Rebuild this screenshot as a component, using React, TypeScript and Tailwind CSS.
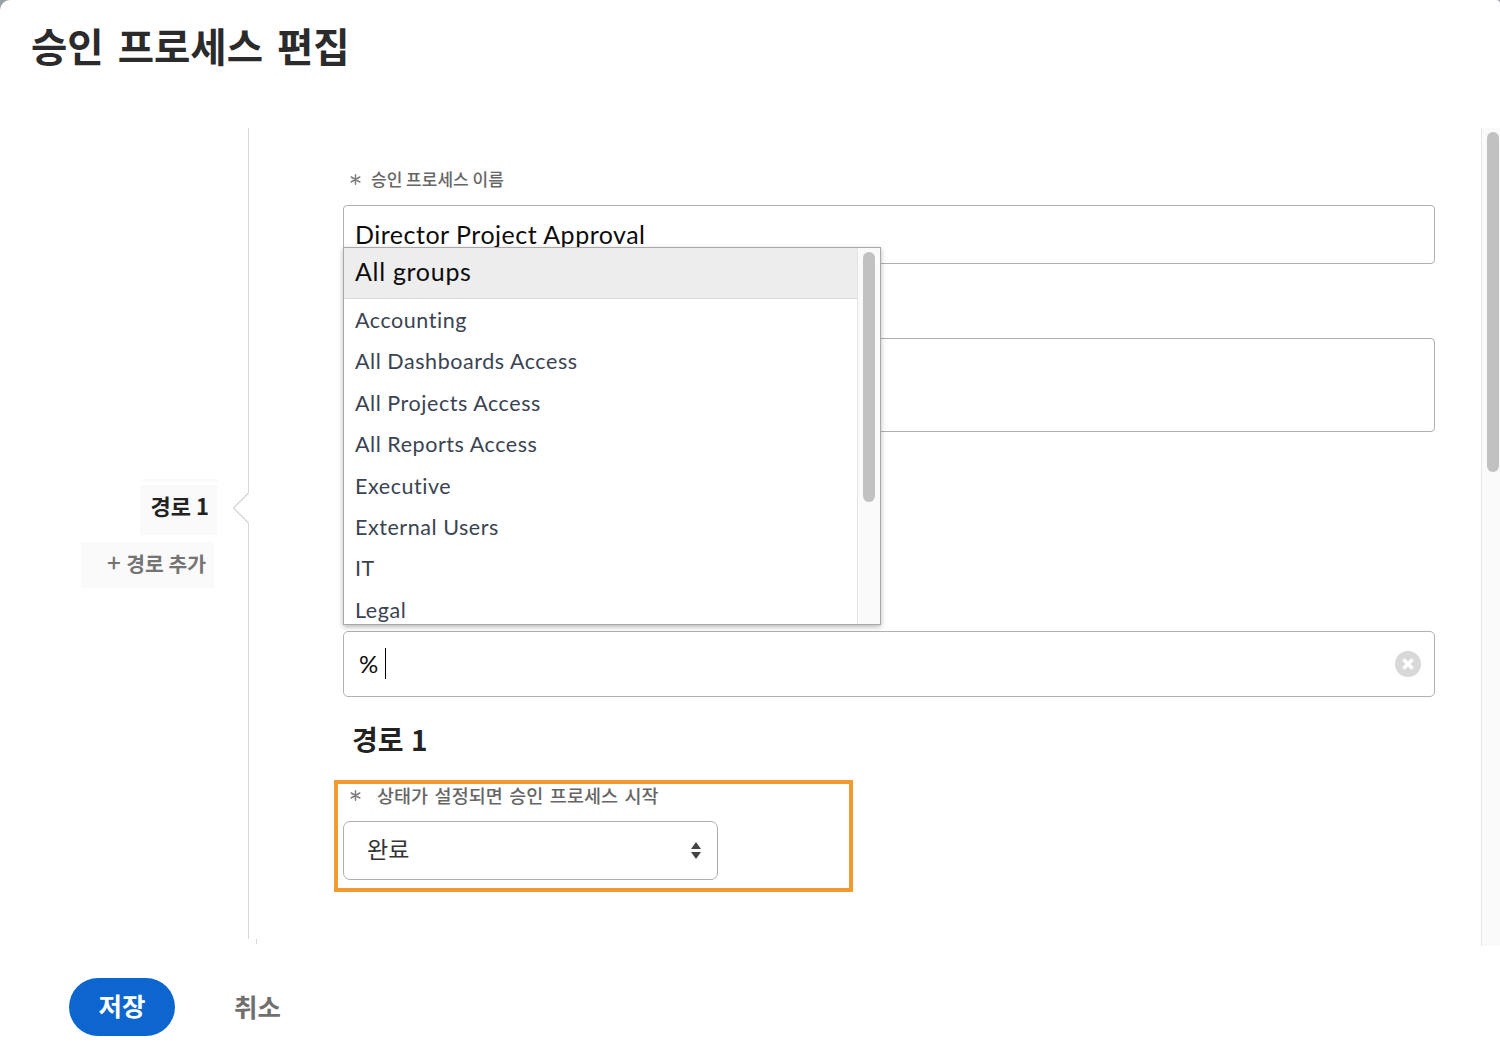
import React from "react";

const groups = [
  "Accounting",
  "All Dashboards Access",
  "All Projects Access",
  "All Reports Access",
  "Executive",
  "External Users",
  "IT",
  "Legal",
];

const kr = "font-['Noto_Sans_CJK_KR',sans-serif]";
const latin = "font-['Lato',sans-serif]";

function Asterisk() {
  return (
    <svg width="11" height="11" viewBox="0 0 11 11" fill="none" stroke="#7d7d7d" strokeWidth="1.5" strokeLinecap="round" className="shrink-0">
      <path d="M5.5 0.8v9.4M1.2 3l8.6 5M9.8 3l-8.6 5" />
    </svg>
  );
}

function Sidebar() {
  return (
    <aside className="flex w-[232px] shrink-0 flex-col items-end pt-[351px]">
      <div className="mr-[14px] h-[3px] w-[76px] bg-[#fafafa]" />
      <div className="mt-[3px] mr-[15px] flex h-[50px] w-[77px] justify-end bg-[#fafafa] pr-[8px]">
        <span className={`${kr} mt-[5px] text-[22px] leading-[30px] font-bold whitespace-nowrap text-[#222]`}>경로 1</span>
      </div>
      <div className="mt-[7px] mr-[18px] flex h-[46px] w-[133px] items-start justify-end bg-[#fafafa] pr-[8px]">
        <span className={`${kr} mt-[6px] text-[20.4px] leading-[30px] font-bold whitespace-nowrap text-[#747474]`}>
          <span className="mr-[1px] text-[24px] leading-[20px] font-medium">+</span> 경로 추가
        </span>
      </div>
    </aside>
  );
}

function Divider() {
  return (
    <div className="flex w-[26px] shrink-0 flex-col">
      <div className="ml-[16px] h-[365px] w-px bg-[#d8d8d8]" />
      <svg width="17" height="30" viewBox="0 0 17 30" fill="none" stroke="#d4d4d4" strokeWidth="1.2">
        <path d="M16.5 0L1.5 15L16.5 30" />
      </svg>
      <div className="ml-[16px] h-[416px] w-px bg-[#d8d8d8]" />
      <div className="ml-[24px] h-[5px] w-px bg-[#d8d8d8]" />
    </div>
  );
}

function GroupMenu() {
  return (
    <div className="absolute top-[42px] left-0 flex h-[378px] w-[538px] border border-[#a9a9a9] bg-white shadow-[0_2px_5px_rgba(0,0,0,0.28)]">
      <div className="flex-1 overflow-hidden">
        <div className={`${latin} flex h-[51px] items-center border-b border-[#d9d9d9] bg-[#ededed] pl-[11px] text-[25px] leading-[50px] tracking-[0.7px] text-[#0c0c0c]`}>
          <span className="-mt-[4px]">All groups</span>
        </div>
        <ul className="pt-[7px]">
          {groups.map((g) => (
            <li key={g} className={`${latin} h-[41.4px] pl-[11px] text-[21.5px] text-[#3a4352]`}>
              <span className="block leading-[28px] tracking-[0.55px]">{g}</span>
            </li>
          ))}
        </ul>
      </div>
      <div className="flex w-[23px] justify-center border-l border-[#e4e4e4] bg-[#fafafa] pt-[4px]">
        <div className="h-[250px] w-[12px] rounded-full bg-[#c1c1c1]" />
      </div>
    </div>
  );
}

export default function App() {
  return (
    <div className="h-[1064px] w-[1500px] overflow-hidden bg-[#9a9ea6]">
      <div className="flex h-full flex-col rounded-tl-[10px] rounded-tr-[4px] bg-white">
        <header className="h-[128px] shrink-0 pt-[15px] pl-[31px]">
          <h1 className={`${kr} text-[39.5px] leading-[60px] font-bold text-[#2b2b2b] [word-spacing:5px]`}>승인 프로세스 편집</h1>
        </header>

        <main className="flex h-[818px] shrink-0">
          <Sidebar />
          <Divider />
          <section className="flex flex-1 flex-col pl-[76px]">
            <label className="mt-[37px] ml-[16px] flex h-[28px] items-center gap-[10px]">
              <Asterisk />
              <span className={`${kr} text-[17px] leading-[28px] font-medium text-[#666]`}>승인 프로세스 이름</span>
            </label>

            <div className="relative mt-[12px] ml-[9px] w-[1092px]">
              <div className={`${latin} flex h-[59px] items-center rounded-[4px] border border-[#b0b0b0] pl-[11px] text-[25px] tracking-[0.5px] text-[#0c0c0c]`}>
                Director Project Approval
              </div>
              <GroupMenu />
            </div>

            <div className="mt-[74px] ml-[9px] h-[94px] w-[1092px] rounded-[4px] border border-[#b0b0b0]" />

            <div className="mt-[199px] ml-[9px] flex h-[66px] w-[1092px] items-center rounded-[5px] border border-[#b0b0b0] pr-[13.5px] pl-[15px]">
              <span className={`${latin} text-[24px] text-[#0c0c0c]`}>%</span>
              <div className="mb-[2px] ml-[7px] h-[31px] w-px bg-black" />
              <svg className="ml-auto" width="26" height="26" viewBox="0 0 26 26">
                <circle cx="13" cy="13" r="13" fill="#d8d8d8" />
                <path d="M8.5 8.5l9 9M17.5 8.5l-9 9" stroke="#fff" strokeWidth="3.6" />
              </svg>
            </div>

            <h2 className={`${kr} mt-[22px] ml-[18px] h-[40px] text-[28px] leading-[40px] font-bold text-[#222] [word-spacing:1px]`}>경로 1</h2>

            <div className="mt-[21px] h-[112px] w-[519px] border-4 border-[#f19a2f]">
              <label className="ml-[12px] flex h-[22px] items-center gap-[16px]">
                <Asterisk />
                <span className={`${kr} text-[18.5px] leading-[22px] font-medium text-[#666] [word-spacing:2.4px]`}>상태가 설정되면 승인 프로세스 시작</span>
              </label>
              <div className="mt-[15px] ml-[5px] flex h-[59px] w-[375px] items-center rounded-[7px] border border-[#adadad] pr-[16px] pl-[23px]">
                <span className={`${kr} -mt-[6px] text-[23px] leading-[30px] text-[#333]`}>완료</span>
                <svg className="ml-auto" width="10" height="17" viewBox="0 0 10 17" fill="#444">
                  <path d="M0 7L5 0L10 7zM0 10L5 17L10 10z" />
                </svg>
              </div>
            </div>
          </section>

          <div className="flex w-[19px] shrink-0 border-l border-[#e6e6e6] bg-[#fafafa] pt-[4px] pl-[4.5px]">
            <div className="h-[340px] w-[12px] rounded-full bg-[#c1c1c1]" />
          </div>
        </main>

        <footer className="flex pt-[32px] pl-[69px]">
          <button className={`${kr} flex h-[58px] w-[106px] items-center justify-center rounded-full bg-[#0d66d0] pb-[3px] text-[25.5px] font-bold text-white`}>저장</button>
          <button className={`${kr} ml-[59px] h-[58px] pb-[2px] text-[25.5px] font-bold text-[#707070]`}>취소</button>
        </footer>
      </div>
    </div>
  );
}
